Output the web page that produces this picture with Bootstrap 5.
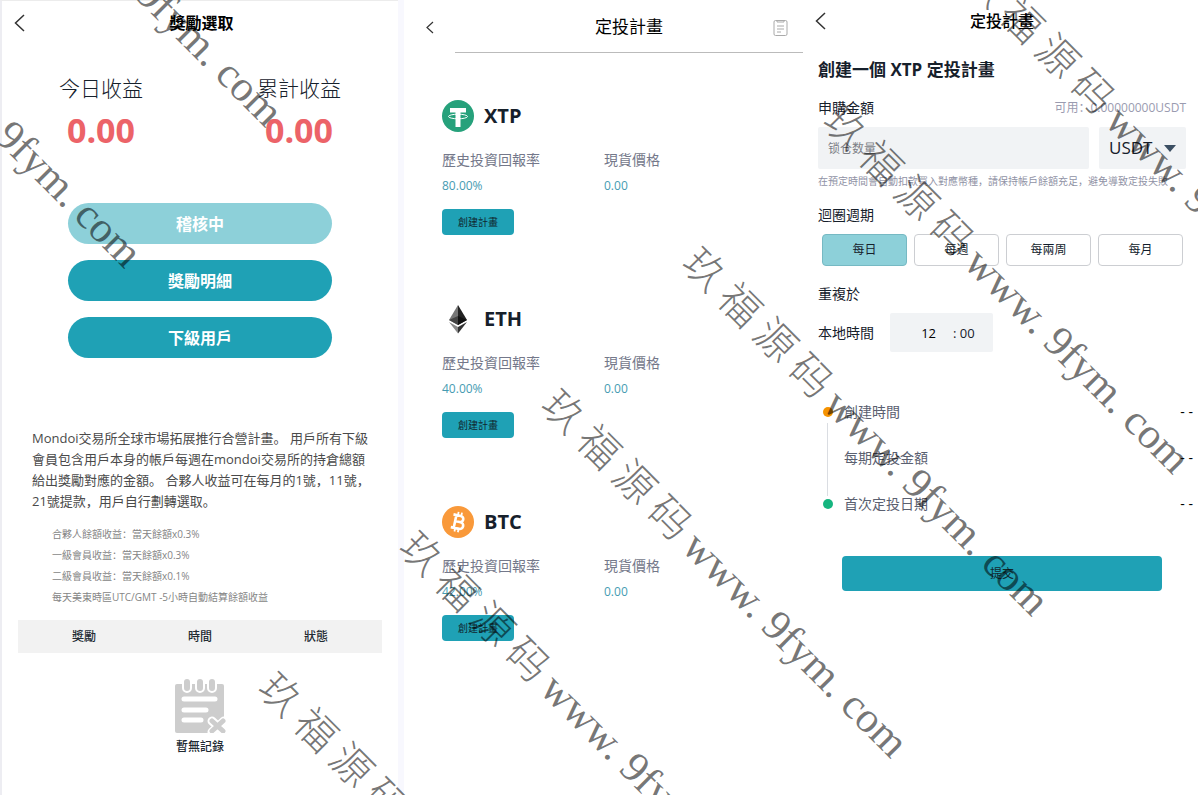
<!DOCTYPE html>
<html lang="zh-CN">
<head>
<meta charset="utf-8">
<meta name="viewport" content="width=device-width, initial-scale=1">
<title>定投計畫</title>
<link href="https://cdn.jsdelivr.net/npm/bootstrap@5.3.0/dist/css/bootstrap.min.css" rel="stylesheet">
<style>
  :root { --teal: #1fa1b5; --teal-soft: #8dd0d9; --ink: #16202b; --field: #f1f3f5; }
  body { font-family: "Open Sans", "Noto Sans CJK SC", sans-serif; color: var(--ink); background: #fff; font-size: 14px; line-height: 20px; }
  .screens { display: grid; grid-template-columns: 398fr 405fr 395fr; min-height: 100vh; }
  .icon-btn { border: 0; background: none; padding: 0; display: flex; color: #333; }
  .title-16 { font-size: 16px; line-height: 24px; color: #000; }

  /* rewards */
  .rewards { border-left: 2px solid #ededf2; border-top: 1px solid #ececec; }
  .rewards-bar { height: 44px; padding: 0 12px; }
  .stats { margin-top: 28px; }
  .stat-label { font-size: 21px; line-height: 30px; font-weight: 300; }
  .stat-value { font-size: 34px; line-height: 54px; color: #ec6368; }
  .pill-stack { margin: 46px 66px 0; gap: 16px; }
  .pill { height: 41px; border: 0; padding: 0; background: var(--teal); color: #fff; font-size: 16px; font-weight: 700; }
  .pill.soft { background: var(--teal-soft); }
  .intro { margin: 70px 12px 0 30px; font-size: 13px; line-height: 21px; color: #4a4a4a; }
  .rates { margin: 12px 0 0 50px; font-size: 10px; line-height: 21px; color: #858585; }
  .log-head { margin: 12px 16px 0; background: #f2f2f2; }
  .log-head th { font-size: 12px; line-height: 33px; padding: 0; width: 33%; text-align: center; font-weight: 500; color: #222b33; }
  .empty { margin-top: 26px; font-size: 12px; font-weight: 500; gap: 4px; color: #222b33; }

  /* plans */
  .plans { border-left: 6px solid #f8f8fe; }
  .plans-bar { height: 52px; padding: 2px 15px 0 22px; }
  .plans-title { font-size: 17px; padding-left: 51px; }
  .plans-rule { margin: 0 0 0 51px; border: 0; border-top: 1px solid #bbb; opacity: 1; }
  .plan-list { padding: 47px 20px 0 38px; gap: 68px; }
  .coin { gap: 10px; }
  .coin-name { font-size: 20px; line-height: 32px; font-weight: 700; }
  .plan-facts { margin: 18px 0 0; display: grid; grid-template-columns: 162px 1fr; row-gap: 6px; }
  .plan-facts dt { font-weight: 400; color: #74788a; grid-row: 1; }
  .plan-facts dd { margin: 0; font-size: 12px; color: #469bb2; grid-row: 2; }
  .plan-btn { margin-top: 13px; width: 72px; height: 26px; padding: 0; border: 0; border-radius: 4px; background: var(--teal); font-size: 10px; color: #10272f; }

  /* plan form */
  .plan-form { padding: 0 12px 0 15px; }
  .form-bar { height: 40px; padding-top: 1px; }
  .back-edge { margin-left: -3px; }
  .form-title { font-size: 17px; line-height: 24px; margin: 18px 0 0; font-weight: 700; }
  .amount-head { margin-top: 16px; }
  .free { font-size: 12px; color: #9a9bb0; }
  .amount-row { margin-top: 9px; display: grid; grid-template-columns: 1fr 87px; gap: 10px; }
  .field { height: 42px; border: 0; border-radius: 2px; background-color: var(--field); box-shadow: none; }
  .amount { padding: 0 10px; font-size: 12px; }
  .amount::placeholder { color: #7d7f86; }
  .coin-select { font-size: 17px; padding: 0 0 0 10px; color: var(--ink); background-image: url("data:image/svg+xml,%3Csvg xmlns='http://www.w3.org/2000/svg' viewBox='0 0 12 7'%3E%3Cpath d='M0 0h12L6 7z' fill='%233c4f63'/%3E%3C/svg%3E"); background-size: 12px 7px; background-position: right 10px center; }
  .hint { margin: 2px 0 0; font-size: 10px; color: #9092a5; white-space: nowrap; }
  .cycle-label { margin-top: 14px; }
  .cycle { margin: 9px 3px 18px 4px; gap: 7px; display: grid; grid-template-columns: repeat(4, 1fr); }
  .cycle .btn { height: 32px; padding: 0; border: 1px solid #ccced2; border-radius: 4px; font-size: 12px; line-height: 30px; color: #111c2b; }
  .cycle .btn-check:checked + .btn { background: var(--teal-soft); border-color: #76b9c3; }
  .time-row { margin-top: 9px; }
  .time-box { width: 103px; height: 39px; background: var(--field); font-size: 13px; border-radius: 2px; }
  .time-box input { box-sizing: content-box; width: 25px; border: 0; background: none; padding: 0 17px 0 0; margin-left: 21px; text-align: right; }
  .steps { margin: 50px -7px 0 5px; position: relative; color: #5a6070; list-style: none; padding: 0; display: grid; gap: 26px; }
  .steps::before { content: ""; position: absolute; left: 4px; top: 21px; bottom: 18px; border-left: 1px solid #dadde2; }
  .steps li { display: flex; align-items: center; }
  .node { width: 10px; height: 10px; border-radius: 50%; margin-right: 11px; }
  .node.start { background: #f59300; }
  .node.end { background: #16b57f; }
  .submit { margin: 42px 24px 0; height: 35px; padding: 0; border: 0; border-radius: 4px; background: var(--teal); font-size: 12px; color: #10272f; }

  /* diagonal watermark laid over every screen */
  .marks { inset: 0; overflow: hidden; pointer-events: none; z-index: 5; }
  .marks span { position: absolute; white-space: nowrap; line-height: 50px; transform-origin: 0 50%; transform: rotate(45deg); color: rgba(0, 0, 0, .55); font-size: 43px; font-family: "Liberation Serif", serif; }
  .marks b { font-family: "Noto Sans CJK SC", sans-serif; font-weight: 300; font-size: 41px; line-height: 50px; }
</style>
</head>
<body>
<div class="position-relative overflow-hidden">
<main class="screens">

  <section class="rewards">
    <header class="rewards-bar d-flex align-items-center">
      <button class="icon-btn" aria-label="返回"><svg width="11" height="18" viewBox="0 0 11 18" fill="none" stroke="currentColor" stroke-width="1.5"><path d="M10 1 1.500 9 10 17"/></svg></button>
      <h1 class="title-16 fw-bold flex-fill text-center m-0 pe-2">獎勵選取</h1>
    </header>
    <div class="stats row g-0 text-center">
      <div class="col-6"><div class="stat-label">今日收益</div><div class="stat-value fw-bold">0.00</div></div>
      <div class="col-6"><div class="stat-label">累計收益</div><div class="stat-value fw-bold">0.00</div></div>
    </div>
    <div class="pill-stack d-grid">
      <button class="pill soft rounded-pill">稽核中</button>
      <button class="pill rounded-pill">獎勵明細</button>
      <button class="pill rounded-pill">下級用戶</button>
    </div>
    <p class="intro">Mondoi交易所全球市場拓展推行合營計畫。 用戶所有下級<br>會員包含用戶本身的帳戶每週在mondoi交易所的持倉總額<br>給出獎勵對應的金額。 合夥人收益可在每月的1號，11號，<br>21號提款，用戶自行劃轉選取。</p>
    <ul class="rates list-unstyled">
      <li>合夥人餘額收益：當天餘額x0.3%</li>
      <li>一級會員收益：當天餘額x0.3%</li>
      <li>二級會員收益：當天餘額x0.1%</li>
      <li>每天美東時區UTC/GMT -5小時自動結算餘額收益</li>
    </ul>
    <div class="log-head px-2">
      <table class="w-100"><thead><tr><th>獎勵</th><th>時間</th><th>狀態</th></tr></thead></table>
    </div>
    <div class="empty d-flex flex-column align-items-center">
      <svg width="52" height="54" viewBox="0 0 52 54">
        <rect x="1" y="5" width="49" height="49" rx="2" fill="#cdcdcd"/>
        <g fill="#cdcdcd" stroke="#fff" stroke-width="2"><rect x="9" y="-1" width="8" height="14" rx="4"/><rect x="22" y="-1" width="8" height="14" rx="4"/><rect x="34" y="-1" width="8" height="14" rx="4"/></g>
        <g stroke="#fff" stroke-width="5" stroke-linecap="round"><path d="M10 20h31M10 31h22M10 41h17"/></g>
        <path d="m38 42 12 11m0-11L38 53" stroke="#fff" stroke-width="9" stroke-linecap="round"/>
        <path d="m38 42 11 10m0-10L38 52" stroke="#cdcdcd" stroke-width="5" stroke-linecap="round"/>
      </svg>
      <span>暫無記錄</span>
    </div>
  </section>

  <section class="plans">
    <header class="plans-bar d-flex align-items-center">
      <button class="icon-btn" aria-label="返回"><svg width="8" height="13" viewBox="0 0 8 13" fill="none" stroke="currentColor" stroke-width="1.200"><path d="M7 1 1 6.500 7 12"/></svg></button>
      <h2 class="plans-title m-0 fw-normal text-black text-center flex-fill">定投計畫</h2>
      <button class="icon-btn" aria-label="記錄"><svg width="15" height="17" viewBox="0 0 15 17" fill="none" stroke="#aaa"><rect x="1" y="1.500" width="13" height="15" rx="1.500"/><path d="M4 1v2h7V1M4 7h7M4 10h7M4 13h4"/></svg></button>
    </header>
    <hr class="plans-rule">
    <div class="plan-list d-flex flex-column">
      <article>
        <div class="coin d-flex align-items-center"><svg width="32" height="32" viewBox="0 0 32 32"><circle cx="16" cy="16" r="16" fill="#26a17b"/><path d="M8 8h16v4.500h-5.500V27h-5V12.500H8z" fill="#fff"/><ellipse cx="16" cy="16.500" rx="9.500" ry="2.300" fill="none" stroke="#fff" stroke-width="1"/></svg><span class="coin-name">XTP</span></div>
        <dl class="plan-facts"><dt>歷史投資回報率</dt><dd>80.00%</dd><dt>現貨價格</dt><dd>0.00</dd></dl>
        <button class="plan-btn">創建計畫</button>
      </article>
      <article>
        <div class="coin d-flex align-items-center"><svg width="32" height="32" viewBox="0 0 32 32"><path d="M16 2 7 17l9 5z" fill="#777"/><path d="m16 2 9 15-9 5z" fill="#222"/><path d="m7 17 9-4v9z" fill="#444"/><path d="m25 17-9-4v9z" fill="#111"/><path d="m7 19 9 5v6.500z" fill="#888"/><path d="m25 19-9 5v6.500z" fill="#333"/></svg><span class="coin-name">ETH</span></div>
        <dl class="plan-facts"><dt>歷史投資回報率</dt><dd>40.00%</dd><dt>現貨價格</dt><dd>0.00</dd></dl>
        <button class="plan-btn">創建計畫</button>
      </article>
      <article>
        <div class="coin d-flex align-items-center"><svg width="32" height="32" viewBox="0 0 32 32"><circle cx="16" cy="16" r="16" fill="#f9993a"/><g transform="rotate(12 16 16)" fill="none" stroke="#fff" stroke-width="2.600"><path d="M10 9.500h7.500a3.100 3.100 0 0 1 0 6.200H13m0 0h5.500a3.400 3.400 0 0 1 0 6.800H10M13 9.500v13"/><path d="M14.500 6v3M18 6v3M14.500 23v3M18 23v3" stroke-width="1.800"/></g></svg><span class="coin-name">BTC</span></div>
        <dl class="plan-facts"><dt>歷史投資回報率</dt><dd>42.00%</dd><dt>現貨價格</dt><dd>0.00</dd></dl>
        <button class="plan-btn">創建計畫</button>
      </article>
    </div>
  </section>

  <form class="plan-form">
    <header class="form-bar d-flex align-items-center">
      <button type="button" class="icon-btn back-edge" aria-label="返回"><svg width="11" height="18" viewBox="0 0 11 18" fill="none" stroke="currentColor" stroke-width="1.500"><path d="M10 1 1.500 9 10 17"/></svg></button>
      <h2 class="title-16 flex-fill text-center m-0 pe-2 fw-medium">定投計畫</h2>
    </header>
    <h3 class="form-title">創建一個 XTP 定投計畫</h3>
    <div class="amount-head d-flex justify-content-between"><label for="amount">申購金額</label><span class="free">可用：0.00000000USDT</span></div>
    <div class="amount-row">
      <input id="amount" class="form-control field amount" type="text" placeholder="锁仓数量">
      <select class="form-select field coin-select" aria-label="幣種"><option>USDT</option></select>
    </div>
    <p class="hint">在預定時間會自動扣款買入對應幣種，請保持帳戶餘額充足，避免導致定投失敗</p>
    <div class="cycle-label">迴圈週期</div>
    <div class="cycle">
      <input class="btn-check" type="radio" name="cycle" id="c1" checked><label class="btn" for="c1">每日</label>
      <input class="btn-check" type="radio" name="cycle" id="c2"><label class="btn" for="c2">每週</label>
      <input class="btn-check" type="radio" name="cycle" id="c3"><label class="btn" for="c3">每兩周</label>
      <input class="btn-check" type="radio" name="cycle" id="c4"><label class="btn" for="c4">每月</label>
    </div>
    <div>重複於</div>
    <div class="time-row d-flex align-items-center gap-3"><label for="hour">本地時間</label><div class="time-box d-flex align-items-center"><input id="hour" type="text" value="12"><span>: 00</span></div></div>
    <ul class="steps">
      <li><i class="node start"></i><span>創建時間</span><span class="ms-auto text-black">- -</span></li>
      <li><i class="node"></i><span>每期定投金額</span><span class="ms-auto text-black">- -</span></li>
      <li><i class="node end"></i><span>首次定投日期</span><span class="ms-auto text-black">- -</span></li>
    </ul>
    <div class="d-grid"><button type="button" class="submit">提交</button></div>
  </form>
</main>

<div class="marks position-absolute" aria-hidden="true">
  <span style="left:3px;top:103px">9fym. com</span>
  <span style="left:144px;top:-38px">9fym. com</span>
  <span style="left:267px;top:652px"><b>玖 福 源 码 </b>www. 9fym. com</span>
  <span style="left:408px;top:511px"><b>玖 福 源 码 </b>www. 9fym. com</span>
  <span style="left:550px;top:369px"><b>玖 福 源 码 </b>www. 9fym. com</span>
  <span style="left:691px;top:227px"><b>玖 福 源 码 </b>www. 9fym. com</span>
  <span style="left:832px;top:85px"><b>玖 福 源 码 </b>www. 9fym. com</span>
  <span style="left:973px;top:-57px"><b>玖 福 源 码 </b>www. 9fym. com</span>
</div>
</div>
<script src="https://cdn.jsdelivr.net/npm/bootstrap@5.3.0/dist/js/bootstrap.bundle.min.js"></script>
</body>
</html>
